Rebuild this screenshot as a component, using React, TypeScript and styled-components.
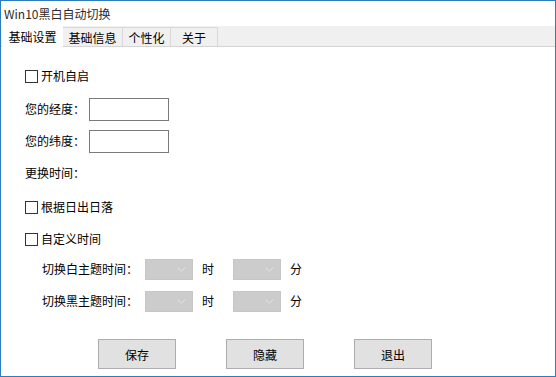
import React from 'react';
import styled, { createGlobalStyle } from 'styled-components';

const Global = createGlobalStyle`
  html, body { margin: 0; padding: 0; background: #ffffff; }
  body {
    font-family: "Noto Sans CJK SC", "Microsoft YaHei", sans-serif;
    font-size: 12px;
    color: #000;
  }
`;

const Window = styled.div`
  width: 556px;
  height: 377px;
  box-sizing: border-box;
  border: 1px solid #2e7cc0;
  background: #fff;
  display: flex;
  flex-direction: column;
  overflow: hidden;
`;

const TitleBar = styled.div`
  height: 25px;
  display: flex;
  align-items: center;
  padding-left: 3px;
  font-size: 12px;
  color: #2a2a2a;
  line-height: 16px;
`;

const TabStrip = styled.div`
  height: 20px;
  background: #f0f0f0;
  border-bottom: 1px solid #d4d4d4;
  display: flex;
  align-items: flex-end;
  padding-left: 1px;
`;

const Tab = styled.div<{ $active?: boolean }>`
  box-sizing: border-box;
  height: ${(p) => (p.$active ? '21px' : '19px')};
  margin-bottom: ${(p) => (p.$active ? '-1px' : '0')};
  width: ${(p) => p.$w}px;
  display: flex;
  align-items: center;
  justify-content: center;
  background: ${(p) => (p.$active ? '#ffffff' : '#f0f0f0')};
  border: 1px solid ${(p) => (p.$active ? '#ffffff' : '#d9d9d9')};
  border-bottom: none;
  border-left: ${(p) => (p.$first ? '1px solid #ffffff' : 'none')};
  font-size: 12px;
  line-height: 16px;
  padding-top: ${(p) => (p.$active ? '0' : '1px')};
` as any;

const Content = styled.div`
  flex: 1;
  display: flex;
  flex-direction: column;
  padding: 13px 0 0 24px;
`;

const Row = styled.div<{ $h: number; $indent?: number }>`
  height: ${(p) => p.$h}px;
  display: flex;
  align-items: center;
  padding-left: ${(p) => p.$indent || 0}px;
  line-height: 16px;
`;

const Box = styled.span`
  width: 13px;
  height: 13px;
  box-sizing: border-box;
  border: 1px solid #333;
  background: #fff;
  margin-right: 3px;
  flex-shrink: 0;
`;

const Label = styled.span<{ $w?: number }>`
  display: inline-block;
  width: ${(p) => (p.$w ? `${p.$w}px` : 'auto')};
  flex-shrink: 0;
`;

const Input = styled.div`
  width: 80px;
  height: 23px;
  box-sizing: border-box;
  border: 1px solid #7a7a7a;
  background: #fff;
`;

const Select = styled.div`
  width: 48px;
  height: 21px;
  box-sizing: border-box;
  border: 1px solid #c6c6c6;
  background: #cccccc;
  display: flex;
  align-items: center;
  justify-content: flex-end;
  padding-right: 6px;
`;

const Unit = styled.span<{ $gap: number }>`
  margin: 0 ${(p) => p.$gap}px 0 9px;
`;

const Buttons = styled.div`
  display: flex;
  gap: 50px;
  padding-left: 73px;
  margin-top: 21px;
`;

const Button = styled.div`
  width: 78px;
  height: 30px;
  box-sizing: border-box;
  border: 1px solid #adadad;
  background: #e1e1e1;
  display: flex;
  align-items: center;
  justify-content: center;
  font-size: 12px;
`;

const Chevron = () => (
  <svg width="9" height="5" viewBox="0 0 9 5">
    <path d="M0.5 0.5 L4.5 4.2 L8.5 0.5" fill="none" stroke="#e4e4e4" strokeWidth="1" />
  </svg>
);

const Check = ({ label }: { label: string }) => (
  <>
    <Box />
    <span>{label}</span>
  </>
);

const TimeRow = ({ label, h }: { label: string; h: number }) => (
  <Row $h={h} $indent={17}>
    <Label $w={103}>{label}</Label>
    <Select>
      <Chevron />
    </Select>
    <Unit $gap={19}>时</Unit>
    <Select>
      <Chevron />
    </Select>
    <Unit $gap={0}>分</Unit>
  </Row>
);

export default function App() {
  return (
    <>
      <Global />
      <Window>
        <TitleBar>Win10黑白自动切换</TitleBar>
        <TabStrip>
          <Tab $active $first $w={61}>基础设置</Tab>
          <Tab $w={60}>基础信息</Tab>
          <Tab $w={48}>个性化</Tab>
          <Tab $w={47}>关于</Tab>
        </TabStrip>
        <Content>
          <Row $h={32}>
            <Check label="开机自启" />
          </Row>
          <Row $h={34}>
            <Label $w={64}>您的经度：</Label>
            <Input />
          </Row>
          <Row $h={30}>
            <Label $w={64}>您的纬度：</Label>
            <Input />
          </Row>
          <Row $h={34}>
            <Label>更换时间：</Label>
          </Row>
          <Row $h={34}>
            <Check label="根据日出日落" />
          </Row>
          <Row $h={30}>
            <Check label="自定义时间" />
          </Row>
          <TimeRow label="切换白主题时间：" h={30} />
          <TimeRow label="切换黑主题时间：" h={34} />
          <Buttons>
            <Button>保存</Button>
            <Button>隐藏</Button>
            <Button>退出</Button>
          </Buttons>
        </Content>
      </Window>
    </>
  );
}
